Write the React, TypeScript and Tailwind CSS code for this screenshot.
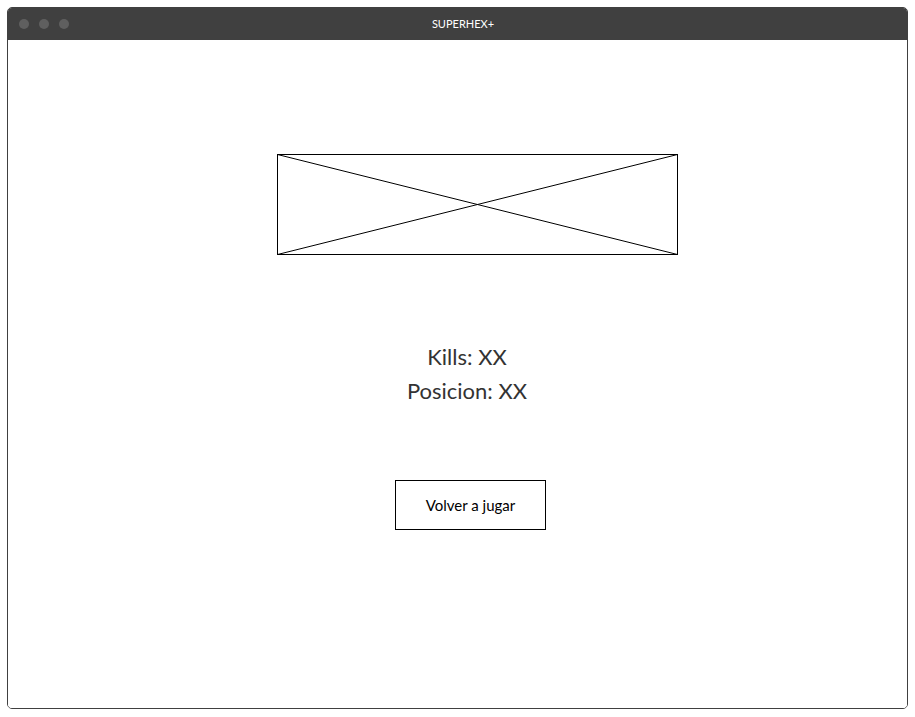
const App = () => {
    return (
        <div className="h-[717px] w-[915px] bg-white pl-[7px] pt-[7px]">
            {/* Window frame */}
            <div className="flex h-[702px] w-[901px] flex-col overflow-hidden rounded-[5px] border border-[#404040] font-['Lato',sans-serif]">
                {/* Title bar */}
                <div className="relative flex h-[32px] shrink-0 items-center bg-[#404040]">
                    <div className="flex items-center gap-[10px] pl-[11px]">
                        <span className="h-[10px] w-[10px] rounded-full bg-[#5f5f5f]" />
                        <span className="h-[10px] w-[10px] rounded-full bg-[#5f5f5f]" />
                        <span className="h-[10px] w-[10px] rounded-full bg-[#5f5f5f]" />
                    </div>
                    <span className="absolute left-0 right-0 top-[9px] pl-[11px] text-center text-[11px] leading-[14px] text-white">
                        SUPERHEX+
                    </span>
                </div>

                {/* Content */}
                <div className="flex flex-1 flex-col items-start bg-white">
                    {/* Image placeholder */}
                    <svg
                        className="ml-[269px] mt-[114px]"
                        width="401"
                        height="101"
                        viewBox="0 0 401 101"
                    >
                        <rect x="0.5" y="0.5" width="400" height="100" fill="none" stroke="#000" />
                        <line x1="0.5" y1="0.5" x2="400.5" y2="100.5" stroke="#000" />
                        <line x1="0.5" y1="100.5" x2="400.5" y2="0.5" stroke="#000" />
                    </svg>

                    {/* Stats */}
                    <div className="ml-[359px] mt-[85px] w-[200px] text-center text-[22px] leading-[34px] text-[#333333]">
                        <p>Kills: XX</p>
                        <p>Posicion: XX</p>
                    </div>

                    {/* Play again */}
                    <button className="ml-[387px] mt-[72px] flex h-[50px] w-[151px] items-center justify-center border border-black bg-white text-[15px] text-black">
                        Volver a jugar
                    </button>
                </div>
            </div>
        </div>
    );
};

export default App;
